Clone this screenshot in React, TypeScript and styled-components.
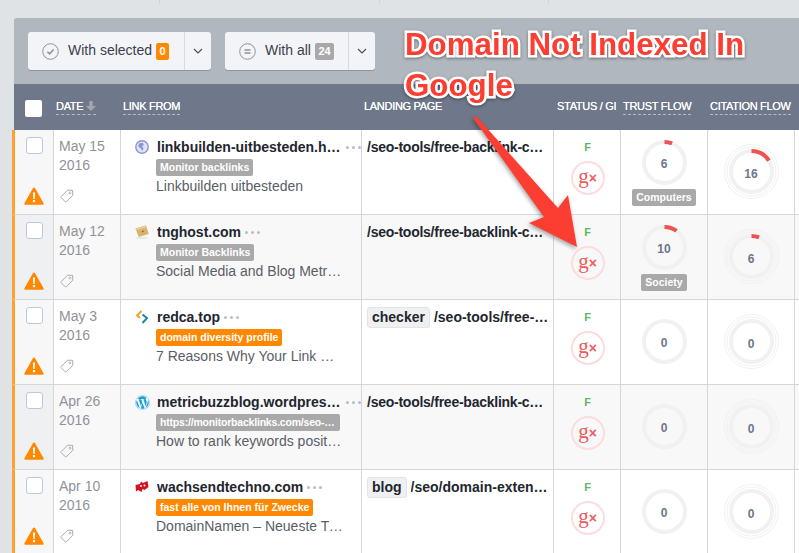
import React from "react";
import styled, { createGlobalStyle, css } from "styled-components";
import { FaWordpress } from "react-icons/fa";

const Global = createGlobalStyle`
  html, body { margin: 0; padding: 0; background: #e0e3e6; overflow: hidden; }
  * { box-sizing: border-box; }
  #root { width: 799px; height: 553px; overflow: hidden; position: relative; font-family: "Liberation Sans", Arial, sans-serif; }
`;

const TopStrip = styled.div`
  height: 4px;
  padding-left: 159px;
  display: flex;
`;
const StripCell = styled.div<{ $w: number }>`
  width: ${(p) => p.$w}px;
  border-left: 1px solid #cfd2d6;
`;

const Panel = styled.div`
  margin: 14px 0 0 14px;
  width: 785px;
`;

const Toolbar = styled.div`
  height: 66px;
  background: #b1b7be;
  border-radius: 3px 0 0 0;
  padding: 14px;
  display: flex;
  gap: 14px;
`;
const SplitButton = styled.div<{ $w: number }>`
  width: ${(p) => p.$w}px;
  height: 38px;
  background: #f3f4f8;
  border-radius: 3px;
  box-shadow: 0 1px 0 #8e949c;
  display: flex;
  align-items: center;
`;
const ButtonMain = styled.div`
  flex: 1;
  height: 100%;
  display: flex;
  align-items: center;
  padding-left: 14px;
  color: #3a3f4e;
  font-size: 14px;
  border-right: 1px solid #d8dae0;
`;
const ButtonLabel = styled.span`
  margin: 0 4px 0 9px;
  white-space: nowrap;
  position: relative;
  top: -1px;
`;
const CountBadge = styled.span<{ $orange?: boolean }>`
  background: ${(p) => (p.$orange ? "#ff8800" : "#a9a9a9")};
  color: #fff;
  font-size: 11px;
  font-weight: 700;
  height: 17px;
  line-height: 17px;
  padding: 0 3.5px;
  border-radius: 2px;
`;
const Caret = styled.div`
  width: 26px;
  display: flex;
  justify-content: center;
`;

const columns = css`
  display: grid;
  grid-template-columns: 39px 67px 241px 192px 67px 87px 87px 1fr;
`;

const Header = styled.div`
  ${columns}
  grid-template-columns: 40px 67px 241px 192px 67px 87px 87px 1fr;
  height: 46px;
  background: #6e788a;
  color: #fff;
  font-size: 11px;
`;
const HeadCell = styled.div<{ $pl?: number }>`
  padding: 14px 0 0 ${(p) => p.$pl ?? 2}px;
  white-space: nowrap;
  letter-spacing: -0.3px;
  text-shadow: 0 0 0.5px #fff;
`;
const HeadCheck = styled.div`
  width: 17px;
  height: 17px;
  background: #fff;
  border-radius: 2px;
  margin: 16px 0 0 11px;
`;
const HeadLabel = styled.span<{ $sortable?: boolean }>`
  display: inline-flex;
  align-items: center;
  gap: 3px;
  height: 17px;
  border-bottom: 1px ${(p) => (p.$sortable ? "dashed #b6bcc6" : "solid transparent")};
`;

const RowBox = styled.div<{ $alt?: boolean }>`
  ${columns}
  height: 85px;
  margin-left: -2px;
  width: 787px;
  border-left: 3px solid #ffa033;
  border-bottom: 1px solid #d4d6dc;
  background: ${(p) => (p.$alt ? "#f8f8f9" : "#fff")};
`;
const Cell = styled.div`
  border-right: 1px solid #d4d6dc;
  min-width: 0;
`;
const CheckCell = styled(Cell)<{ $alt?: boolean }>`
  background: ${(p) => (p.$alt ? "#eff0f1" : "#f7f7f8")};
  display: flex;
  flex-direction: column;
  align-items: center;
  justify-content: space-between;
  padding: 7px 0 9px;
`;
const RowCheck = styled.div`
  width: 17px;
  height: 17px;
  background: #fff;
  border: 1px solid #b9c8e0;
  border-radius: 3px;
`;
const DateCell = styled(Cell)`
  padding: 7px 0 11px 5px;
  display: flex;
  flex-direction: column;
  justify-content: space-between;
  align-items: flex-start;
  color: #8f9398;
  font-size: 14px;
  line-height: 19px;
`;
const TagIconWrap = styled.div`
  height: 14px;
  margin-left: 1px;
`;
const LinkCell = styled(Cell)`
  display: grid;
  grid-template-columns: 21px 1fr;
  padding: 7px 0 0 14px;
`;
const FavWrap = styled.div`
  height: 20px;
  display: flex;
  align-items: center;
`;
const LinkBody = styled.div`
  min-width: 0;
`;
const DomainRow = styled.div`
  display: flex;
  align-items: center;
  height: 20px;
  padding-left: 1px;
`;
const Domain = styled.span`
  font-size: 14px;
  font-weight: 700;
  color: #22262e;
  max-width: 185px;
  overflow: hidden;
  text-overflow: ellipsis;
  white-space: nowrap;
`;
const Dots = styled.span`
  display: inline-flex;
  gap: 3px;
  margin-left: 4px;
`;
const Dot = styled.i`
  width: 3px;
  height: 3px;
  border-radius: 50%;
  background: #b9bcc2;
`;
const LabelTag = styled.div<{ $orange?: boolean; $tight?: boolean }>`
  display: block;
  width: fit-content;
  max-width: 184px;
  height: 17px;
  margin-top: 2px;
  padding: 0 4px;
  line-height: 17px;
  border-radius: 2px;
  background: ${(p) => (p.$orange ? "#ff8800" : "#a9a9a9")};
  color: #fff;
  font-size: 10.5px;
  font-weight: 700;
  letter-spacing: ${(p) => (p.$tight ? "-0.2px" : "0")};
  overflow: hidden;
  text-overflow: ellipsis;
  white-space: nowrap;
`;
const Desc = styled.div`
  font-size: 14px;
  line-height: 20px;
  color: #5a5e66;
  max-width: 187px;
  overflow: hidden;
  text-overflow: ellipsis;
  white-space: nowrap;
`;
const LandingCell = styled(Cell)`
  padding: 7px 3px 0 5px;
  height: 84px;
`;
const LandingLine = styled.div`
  display: flex;
  align-items: center;
  gap: 4px;
  height: 20px;
`;
const Chip = styled.span`
  flex: none;
  height: 21px;
  line-height: 19px;
  padding: 0 4px;
  background: #eff0f1;
  border: 1px solid #e3e4e6;
  border-radius: 3px;
  font-size: 14px;
  font-weight: 700;
  color: #22262e;
`;
const Path = styled.span<{ $tight?: boolean }>`
  font-size: 14px;
  font-weight: 700;
  color: #22262e;
  letter-spacing: ${(p) => (p.$tight ? "-0.25px" : "0")};
  min-width: 0;
  overflow: hidden;
  text-overflow: ellipsis;
  white-space: nowrap;
`;
const StatusCell = styled(Cell)`
  display: flex;
  flex-direction: column;
  align-items: center;
  padding: 10px 0 0 1px;
`;
const Fetch = styled.div`
  color: #5cb85c;
  font-size: 11px;
  font-weight: 700;
  line-height: 14px;
`;
const GoogleBadge = styled.div`
  width: 34px;
  height: 34px;
  margin-top: 7px;
  border: 2px solid #fcdcdc;
  border-radius: 50%;
  display: flex;
  align-items: center;
  justify-content: center;
  color: #ef5a5a;
`;
const GoogleG = styled.span`
  font-family: "Liberation Serif", serif;
  font-size: 21px;
  line-height: 20px;
  position: relative;
  top: -2px;
`;
const GoogleX = styled.span`
  font-size: 14px;
  font-weight: 700;
  line-height: 20px;
`;
const FlowCell = styled(Cell)<{ $tagged?: boolean }>`
  display: flex;
  flex-direction: column;
  align-items: center;
  padding-top: ${(p) => (p.$tagged ? 10 : 19)}px;
`;
const CitationCell = styled(Cell)`
  display: flex;
  justify-content: center;
  align-items: flex-start;
  padding-top: 14px;
`;
const RingStack = styled.div`
  display: grid;
  place-items: center;
  & > * {
    grid-area: 1 / 1;
  }
`;
const RingValue = styled.span<{ $dy: number }>`
  color: #6b7789;
  font-size: 12px;
  font-weight: 700;
  position: relative;
  top: ${(p) => p.$dy}px;
`;
const FlowTag = styled(LabelTag)`
  margin-top: 4px;
`;
const TailCell = styled.div``;

const Callout = styled.div`
  position: absolute;
  left: 405px;
  top: 24px;
  width: 380px;
  font-size: 31.3px;
  line-height: 41px;
  font-weight: 700;
  color: #fc3d32;
  -webkit-text-stroke: 5px #fff;
  paint-order: stroke fill;
  filter: drop-shadow(0 1px 1.5px rgba(0, 0, 0, 0.4));
`;
const ArrowSvg = styled.svg`
  position: absolute;
  left: 0;
  top: 0;
  filter: drop-shadow(-1px 2px 2px rgba(0, 0, 0, 0.35));
  pointer-events: none;
`;

const CheckCircle = () => (
  <svg width="17" height="17" viewBox="0 0 17 17" fill="none">
    <circle cx="8.5" cy="8.5" r="7.8" stroke="#8d919b" />
    <path d="M5.4 8.7l2.2 2.2 4-4.4" stroke="#8d919b" strokeWidth="1.6" />
  </svg>
);
const EqualCircle = () => (
  <svg width="17" height="17" viewBox="0 0 17 17" fill="none">
    <circle cx="8.5" cy="8.5" r="7.8" stroke="#8d919b" />
    <path d="M5.5 7h6M5.5 10h6" stroke="#8d919b" strokeWidth="1.3" />
  </svg>
);
const Chevron = () => (
  <svg width="10" height="6" viewBox="0 0 10 6" fill="none">
    <path d="M1 1l4 4 4-4" stroke="#4a4f5c" strokeWidth="1.2" />
  </svg>
);
const SortArrow = () => (
  <svg width="10" height="10" viewBox="0 0 10 10">
    <path d="M3.3 0h3.4v5H10L5 10 0 5h3.3z" fill="#a0a6b0" />
  </svg>
);
const Warning = () => (
  <svg width="20" height="18" viewBox="0 0 20 18">
    <path d="M10 .6c.5 0 .9.3 1.1.7l8.5 15c.4.7 0 1.5-.9 1.5H1.3c-.9 0-1.3-.8-.9-1.5l8.5-15c.2-.4.6-.7 1.1-.7z" fill="#ff8800" />
    <path d="M8.9 5.5h2.2l-.4 6.6H9.3z" fill="#fff" />
    <rect x="8.9" y="13" width="2.2" height="2.2" fill="#fff" />
  </svg>
);
const TagIcon = () => (
  <svg width="14" height="14" viewBox="0 0 14 14" fill="none">
    <path d="M7.6 1.2l5 .1.2 5-6.4 6.5a.8.8 0 0 1-1.1 0L1.2 8.7a.8.8 0 0 1 0-1.1z" stroke="#a7abb0" strokeWidth="1" />
    <circle cx="10" cy="4" r="1" stroke="#a7abb0" strokeWidth="0.8" />
  </svg>
);
const GlobeFav = () => (
  <svg width="14" height="14" viewBox="0 0 14 14">
    <circle cx="7" cy="7" r="6.2" fill="#dfe4f4" stroke="#8c97cf" strokeWidth="1.4" />
    <path d="M4 3.5l3.5-.8 1.5 2-2 1.5 1.6 2.2-1.6 2.6-1-2.6L3.2 6.5z" fill="#8797cf" />
  </svg>
);
const BoxFav = () => (
  <svg width="14" height="14" viewBox="0 0 14 14">
    <ellipse cx="7" cy="13" rx="6.5" ry="1" fill="#e8e8e4" />
    <path d="M0.5 3.5L11 0.5l2.7 8.6-10 3z" fill="#d9b36c" />
    <path d="M0.5 3.5L11 0.5l.7 2-10.5 3z" fill="#e6c98c" />
    <circle cx="7.8" cy="6.4" r="0.9" fill="#8a6a30" />
  </svg>
);
const ChevronFav = () => (
  <svg width="14" height="14" viewBox="0 0 14 14" fill="none">
    <path d="M6.5 1L2 5.5l3 2.6" stroke="#f7a13a" strokeWidth="2" />
    <path d="M7.5 4.5l4.5 3.6L7.5 13" stroke="#1b87ad" strokeWidth="2" />
  </svg>
);
const RedFav = () => (
  <svg width="14" height="14" viewBox="0 0 14 14">
    <path d="M0.5 5l4.5-1 1-2.5 2 1.5 4.5-2 1 6-4 3-2-1-1 3L3 10 1 11.5z" fill="#d7101c" />
    <circle cx="6" cy="6" r="1" fill="#fff" />
    <circle cx="9.5" cy="5.5" r="1" fill="#fff" />
  </svg>
);
const WpFav = () => <FaWordpress size={15} color="#21a0d8" />;

const Ring = ({ value }: { value: number }) => {
  const r = 20.5;
  const c = 2 * Math.PI * r;
  return (
    <svg width="45" height="45" viewBox="0 0 45 45" fill="none">
      <circle cx="22.5" cy="22.5" r={r} stroke="#f0f1f3" strokeWidth="4" />
      {value > 0 && (
        <circle
          cx="22.5"
          cy="22.5"
          r={r}
          stroke="#ef5350"
          strokeWidth="4"
          strokeDasharray={`${(c * value) / 100} ${c}`}
          transform="rotate(-90 22.5 22.5)"
        />
      )}
    </svg>
  );
};
const CitationRing = ({ value }: { value: number }) => {
  const r = 20.5;
  const c = 2 * Math.PI * r;
  return (
    <svg width="55" height="55" viewBox="0 0 55 55" fill="none">
      <circle cx="27.5" cy="27.5" r="27" stroke="#f1f1f3" />
      <circle cx="27.5" cy="27.5" r="24.5" stroke="#f1f1f3" />
      <circle cx="27.5" cy="27.5" r={r} stroke="#f0f1f3" strokeWidth="4" />
      {value > 0 && (
        <circle
          cx="27.5"
          cy="27.5"
          r={r}
          stroke="#ef5350"
          strokeWidth="4"
          strokeDasharray={`${(c * value) / 100} ${c}`}
          transform="rotate(-90 27.5 27.5)"
        />
      )}
    </svg>
  );
};

type RowData = {
  month: string;
  year: string;
  fav: React.ReactNode;
  domain: string;
  tag: string;
  orange?: boolean;
  tightTag?: boolean;
  desc: string;
  chip?: string;
  path: string;
  trust: number;
  topic?: string;
  citation: number;
};

const rows: RowData[] = [
  { month: "May 15", year: "2016", fav: <GlobeFav />, domain: "linkbuilden-uitbesteden.html.example", tag: "Monitor backlinks", desc: "Linkbuilden uitbesteden", path: "/seo-tools/free-backlink-checker/", trust: 6, topic: "Computers", citation: 16 },
  { month: "May 12", year: "2016", fav: <BoxFav />, domain: "tnghost.com", tag: "Monitor Backlinks", desc: "Social Media and Blog Metrics Tools", path: "/seo-tools/free-backlink-checker/", trust: 10, topic: "Society", citation: 6 },
  { month: "May 3", year: "2016", fav: <ChevronFav />, domain: "redca.top", tag: "domain diversity profile", orange: true, desc: "7 Reasons Why Your Link Building", chip: "checker", path: "/seo-tools/free-backlink-checker/", trust: 0, citation: 0 },
  { month: "Apr 26", year: "2016", fav: <WpFav />, domain: "metricbuzzblog.wordpress.com", tag: "https://monitorbacklinks.com/seo-tools/free", tightTag: true, desc: "How to rank keywords position fast", path: "/seo-tools/free-backlink-checker/", trust: 0, citation: 0 },
  { month: "Apr 10", year: "2016", fav: <RedFav />, domain: "wachsendtechno.com", tag: "fast alle von Ihnen für Zwecke", orange: true, desc: "DomainNamen – Neueste Trends", chip: "blog", path: "/seo/domain-extensions-guide/", trust: 0, citation: 0 },
];

const Row = ({ d, alt }: { d: RowData; alt: boolean }) => (
  <RowBox $alt={alt}>
    <CheckCell $alt={alt}>
      <RowCheck />
      <Warning />
    </CheckCell>
    <DateCell>
      <div>
        {d.month}
        <br />
        {d.year}
      </div>
      <TagIconWrap>
        <TagIcon />
      </TagIconWrap>
    </DateCell>
    <LinkCell>
      <FavWrap>{d.fav}</FavWrap>
      <LinkBody>
        <DomainRow>
          <Domain>{d.domain}</Domain>
          <Dots>
            <Dot />
            <Dot />
            <Dot />
          </Dots>
        </DomainRow>
        <LabelTag $orange={d.orange} $tight={d.tightTag}>{d.tag}</LabelTag>
        <Desc>{d.desc}</Desc>
      </LinkBody>
    </LinkCell>
    <LandingCell>
      <LandingLine>
        {d.chip && <Chip>{d.chip}</Chip>}
        <Path $tight={!d.chip}>{d.path}</Path>
      </LandingLine>
    </LandingCell>
    <StatusCell>
      <Fetch>F</Fetch>
      <GoogleBadge>
        <GoogleG>g</GoogleG>
        <GoogleX>×</GoogleX>
      </GoogleBadge>
    </StatusCell>
    <FlowCell $tagged={!!d.topic}>
      <RingStack>
        <Ring value={d.trust} />
        <RingValue $dy={1}>{d.trust}</RingValue>
      </RingStack>
      {d.topic && <FlowTag>{d.topic}</FlowTag>}
    </FlowCell>
    <CitationCell>
      <RingStack>
        <CitationRing value={d.citation} />
        <RingValue $dy={2}>{d.citation}</RingValue>
      </RingStack>
    </CitationCell>
    <TailCell />
  </RowBox>
);

export default function App() {
  return (
    <>
      <Global />
      <TopStrip>
        <StripCell $w={220} />
        <StripCell $w={169} />
        <StripCell $w={100} />
      </TopStrip>
      <Panel>
        <Toolbar>
          <SplitButton $w={183}>
            <ButtonMain>
              <CheckCircle />
              <ButtonLabel>With selected</ButtonLabel>
              <CountBadge $orange>0</CountBadge>
            </ButtonMain>
            <Caret>
              <Chevron />
            </Caret>
          </SplitButton>
          <SplitButton $w={150}>
            <ButtonMain>
              <EqualCircle />
              <ButtonLabel>With all</ButtonLabel>
              <CountBadge>24</CountBadge>
            </ButtonMain>
            <Caret>
              <Chevron />
            </Caret>
          </SplitButton>
        </Toolbar>
        <Header>
          <HeadCheck />
          <HeadCell>
            <HeadLabel $sortable>
              DATE <SortArrow />
            </HeadLabel>
          </HeadCell>
          <HeadCell>
            <HeadLabel $sortable>LINK FROM</HeadLabel>
          </HeadCell>
          <HeadCell>
            <HeadLabel>LANDING PAGE</HeadLabel>
          </HeadCell>
          <HeadCell $pl={3}>
            <HeadLabel>STATUS / GI</HeadLabel>
          </HeadCell>
          <HeadCell>
            <HeadLabel $sortable>TRUST FLOW</HeadLabel>
          </HeadCell>
          <HeadCell>
            <HeadLabel $sortable>CITATION FLOW</HeadLabel>
          </HeadCell>
          <div />
        </Header>
        {rows.map((d, i) => (
          <Row key={d.domain} d={d} alt={i % 2 === 1} />
        ))}
      </Panel>
      <ArrowSvg width="799" height="553" viewBox="0 0 799 553">
        <path d="M473 118l3-2 82 92 10-13 9 52-48-24 15-6z" fill="#fc3d32" />
      </ArrowSvg>
      <Callout>Domain Not Indexed In Google</Callout>
    </>
  );
}
